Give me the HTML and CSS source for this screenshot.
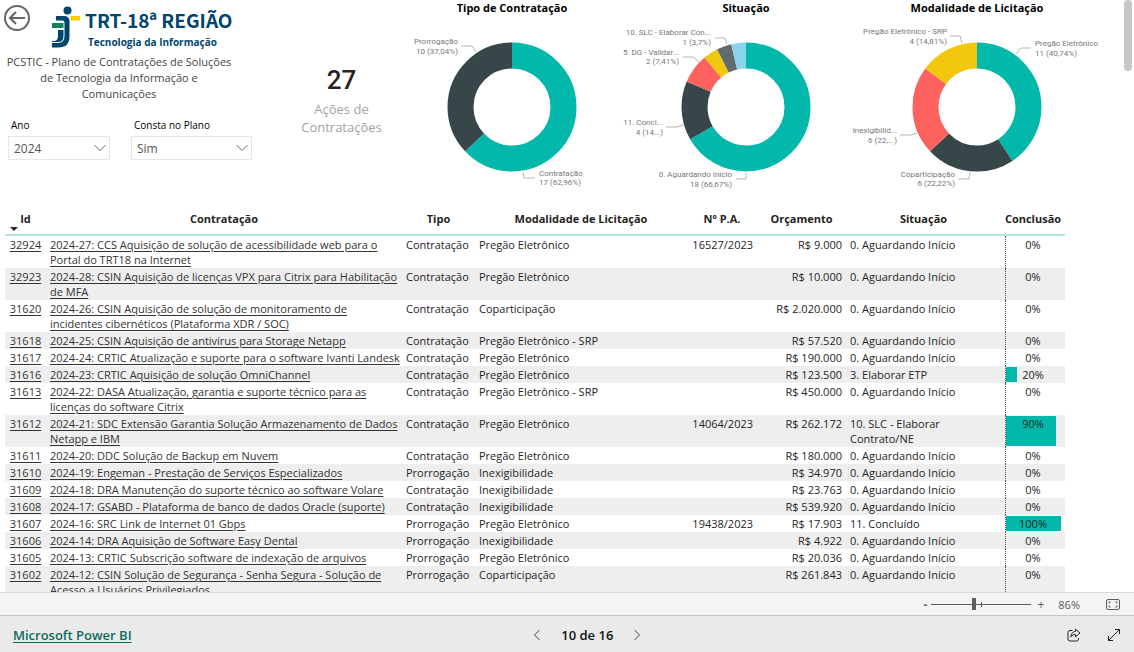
FILE: index.html
```html
<!DOCTYPE html>
<html lang="pt-BR">
<head>
<meta charset="utf-8">
<title>PCSTIC - Plano de Contratações</title>
<link rel="stylesheet" href="styles.css">
</head>
<body>
<main class="report">
  <header class="top">
    <section class="intro">
      <div class="brand">
        <button class="back" type="button" aria-label="Voltar">
          <svg width="28" height="28" viewBox="0 0 28 28"><circle cx="14" cy="14" r="12"/><path d="M22 14H7M13 8l-6 6 6 6"/></svg>
        </button>
        <svg class="logo-mark" width="30" height="43" viewBox="0 0 30 43">
          <circle cx="15.500" cy="4.500" r="4" fill="#00456e"/>
          <path d="M4 10h8q5.500 0 5.500 5.500V30q0 11.500-11 11.500H0V37h6q6.500 0 6.500-7V17q0-2.500-2.500-2.500H4z" fill="#00456e"/>
          <path d="M6 24h5.500v6q0 6-5.500 6H0v-1h2q4 0 4-5z" fill="#00456e"/>
          <path d="M0 17h11.500v5H0z" fill="#0f8060"/>
          <path d="M18.500 10H28v4.500h-9.500z" fill="#ffcb05"/>
        </svg>
        <div class="brand-text">
          <span class="brand-name">TRT-18ª REGIÃO</span>
          <span class="brand-sub">Tecnologia da Informação</span>
        </div>
      </div>
      <h1 class="title">PCSTIC - Plano de Contratações de Soluções de Tecnologia da Informação e Comunicações</h1>
      <div class="slicers">
        <div class="slicer slicer-year">
          <label for="ano">Ano</label>
          <div class="select-box">
            <select id="ano"><option>2024</option></select>
            <svg width="12" height="8" viewBox="0 0 12 8"><path d="M.5 1l5.500 5.500L11.500 1"/></svg>
          </div>
        </div>
        <div class="slicer slicer-plan">
          <label for="plano">Consta no Plano</label>
          <div class="select-box">
            <select id="plano"><option>Sim</option></select>
            <svg width="12" height="8" viewBox="0 0 12 8"><path d="M.5 1l5.500 5.500L11.500 1"/></svg>
          </div>
        </div>
      </div>
    </section>

    <section class="kpi">
      <strong class="kpi-value">27</strong>
      <span class="kpi-label">Ações de Contratações</span>
    </section>

    <section class="charts">
      <figure class="chart">
        <figcaption>Tipo de Contratação</figcaption>
        <svg width="234" height="180" viewBox="-117 -87 234 180">
          <g class="ring" transform="rotate(-90)">
            <circle class="teal" r="51.500" pathLength="27" stroke-dasharray="17 27"/>
            <circle class="dark" r="51.500" pathLength="27" stroke-dasharray="10 27" stroke-dashoffset="-17"/>
          </g>
          <path class="leader" d="M-51-61h11l4 6M11 65l1 6h11"/>
          <g class="end"><text x="-54" y="-63">Prorrogação</text><text x="-54" y="-53">10 (37,04%)</text></g>
          <text x="27" y="69">Contratação</text><text x="27" y="78">17 (62,96%)</text>
        </svg>
      </figure>
      <figure class="chart">
        <figcaption>Situação</figcaption>
        <svg width="234" height="180" viewBox="-117 -87 234 180">
          <g class="ring" transform="rotate(-90)">
            <circle class="teal" r="51.500" pathLength="27" stroke-dasharray="18 27"/>
            <circle class="dark" r="51.500" pathLength="27" stroke-dasharray="4 27" stroke-dashoffset="-18"/>
            <circle class="coral" r="51.500" pathLength="27" stroke-dasharray="2 27" stroke-dashoffset="-22"/>
            <circle class="yellow" r="51.500" pathLength="27" stroke-dasharray="1 27" stroke-dashoffset="-24"/>
            <circle class="gray" r="51.500" pathLength="27" stroke-dasharray="1 27" stroke-dashoffset="-25"/>
            <circle class="sky" r="51.500" pathLength="27" stroke-dasharray="1 27" stroke-dashoffset="-26"/>
          </g>
          <path class="leader" d="M-31-69h10l2 6M-63-50h10l6 5M-80 20h11l6-2M-10 72H0v-6"/>
          <g class="end">
            <text x="-35" y="-72">10. SLC - Elaborar Con...</text><text x="-35" y="-62">1 (3,7%)</text>
            <text x="-67" y="-52">5. DG - Validar...</text><text x="-67" y="-43">2 (7,41%)</text>
            <text x="-83" y="18">11. Concl...</text><text x="-83" y="28">4 (14...)</text>
            <text x="-14" y="70">0. Aguardando Início</text><text x="-14" y="80">18 (66,67%)</text>
          </g>
        </svg>
      </figure>
      <figure class="chart">
        <figcaption>Modalidade de Licitação</figcaption>
        <svg width="234" height="180" viewBox="-117 -87 234 180">
          <g class="ring" transform="rotate(-90)">
            <circle class="teal" r="51.500" pathLength="27" stroke-dasharray="11 27"/>
            <circle class="dark" r="51.500" pathLength="27" stroke-dasharray="6 27" stroke-dashoffset="-11"/>
            <circle class="coral" r="51.500" pathLength="27" stroke-dasharray="6 27" stroke-dashoffset="-17"/>
            <circle class="yellow" r="51.500" pathLength="27" stroke-dasharray="4 27" stroke-dashoffset="-23"/>
          </g>
          <path class="leader" d="M-27-71h10l2 7M39-53l5-6h10M-77 28h11l6-2M-19 72h11l1-7"/>
          <g class="end">
            <text x="-30" y="-73">Pregão Eletrônico - SRP</text><text x="-30" y="-63">4 (14,81%)</text>
            <text x="-80" y="26">Inexigibilid...</text><text x="-80" y="36">6 (22,...)</text>
            <text x="-22" y="70">Coparticipação</text><text x="-22" y="79">6 (22,22%)</text>
          </g>
          <text x="58" y="-61">Pregão Eletrônico</text><text x="58" y="-51">11 (40,74%)</text>
        </svg>
      </figure>
    </section>
  </header>

  <table class="grid">
    <colgroup><col class="c-id"><col><col class="c-tipo"><col class="c-mod"><col class="c-pa"><col class="c-orc"><col class="c-sit"><col class="c-con"></colgroup>
    <thead>
      <tr><th class="sorted">Id</th><th>Contratação</th><th>Tipo</th><th>Modalidade de Licitação</th><th>Nº P.A.</th><th>Orçamento</th><th>Situação</th><th>Conclusão</th></tr>
    </thead>
    <tbody>
      <tr><td><a href="#">32924</a></td><td><a href="#">2024-27: CCS Aquisição de solução de acessibilidade web para o Portal do TRT18 na Internet</a></td><td>Contratação</td><td>Pregão Eletrônico</td><td>16527/2023</td><td>R$ 9.000</td><td>0. Aguardando Início</td><td><i class="track"></i><span>0%</span></td></tr>
      <tr><td><a href="#">32923</a></td><td><a href="#">2024-28: CSIN Aquisição de licenças VPX para Citrix para Habilitação de MFA</a></td><td>Contratação</td><td>Pregão Eletrônico</td><td></td><td>R$ 10.000</td><td>0. Aguardando Início</td><td><i class="track"></i><span>0%</span></td></tr>
      <tr><td><a href="#">31620</a></td><td><a href="#">2024-26: CSIN Aquisição de solução de monitoramento de incidentes cibernéticos (Plataforma XDR / SOC)</a></td><td>Contratação</td><td>Coparticipação</td><td></td><td>R$ 2.020.000</td><td>0. Aguardando Início</td><td><i class="track"></i><span>0%</span></td></tr>
      <tr><td><a href="#">31618</a></td><td><a href="#">2024-25: CSIN Aquisição de antivírus para Storage Netapp</a></td><td>Contratação</td><td>Pregão Eletrônico - SRP</td><td></td><td>R$ 57.520</td><td>0. Aguardando Início</td><td><i class="track"></i><span>0%</span></td></tr>
      <tr><td><a href="#">31617</a></td><td><a href="#">2024-24: CRTIC Atualização e suporte para o software Ivanti Landesk</a></td><td>Contratação</td><td>Pregão Eletrônico</td><td></td><td>R$ 190.000</td><td>0. Aguardando Início</td><td><i class="track"></i><span>0%</span></td></tr>
      <tr><td><a href="#">31616</a></td><td><a href="#">2024-23: CRTIC Aquisição de solução OmniChannel</a></td><td>Contratação</td><td>Pregão Eletrônico</td><td></td><td>R$ 123.500</td><td>3. Elaborar ETP</td><td><i class="track"><b style="width:20%"></b></i><span>20%</span></td></tr>
      <tr><td><a href="#">31613</a></td><td><a href="#">2024-22: DASA Atualização, garantia e suporte técnico para as licenças do software Citrix</a></td><td>Contratação</td><td>Pregão Eletrônico - SRP</td><td></td><td>R$ 450.000</td><td>0. Aguardando Início</td><td><i class="track"></i><span>0%</span></td></tr>
      <tr><td><a href="#">31612</a></td><td><a href="#">2024-21: SDC Extensão Garantia Solução Armazenamento de Dados Netapp e IBM</a></td><td>Contratação</td><td>Pregão Eletrônico</td><td>14064/2023</td><td>R$ 262.172</td><td>10. SLC - Elaborar Contrato/NE</td><td><i class="track"><b style="width:90%"></b></i><span>90%</span></td></tr>
      <tr><td><a href="#">31611</a></td><td><a href="#">2024-20: DDC Solução de Backup em Nuvem</a></td><td>Contratação</td><td>Pregão Eletrônico</td><td></td><td>R$ 180.000</td><td>0. Aguardando Início</td><td><i class="track"></i><span>0%</span></td></tr>
      <tr><td><a href="#">31610</a></td><td><a href="#">2024-19: Engeman - Prestação de Serviços Especializados</a></td><td>Prorrogação</td><td>Inexigibilidade</td><td></td><td>R$ 34.970</td><td>0. Aguardando Início</td><td><i class="track"></i><span>0%</span></td></tr>
      <tr><td><a href="#">31609</a></td><td><a href="#">2024-18: DRA Manutenção do suporte técnico ao software Volare</a></td><td>Contratação</td><td>Inexigibilidade</td><td></td><td>R$ 23.763</td><td>0. Aguardando Início</td><td><i class="track"></i><span>0%</span></td></tr>
      <tr><td><a href="#">31608</a></td><td><a href="#">2024-17: GSABD - Plataforma de banco de dados Oracle (suporte)</a></td><td>Contratação</td><td>Inexigibilidade</td><td></td><td>R$ 539.920</td><td>0. Aguardando Início</td><td><i class="track"></i><span>0%</span></td></tr>
      <tr><td><a href="#">31607</a></td><td><a href="#">2024-16: SRC Link de Internet 01 Gbps</a></td><td>Prorrogação</td><td>Pregão Eletrônico</td><td>19438/2023</td><td>R$ 17.903</td><td>11. Concluído</td><td><i class="track"><b style="width:100%"></b></i><span>100%</span></td></tr>
      <tr><td><a href="#">31606</a></td><td><a href="#">2024-14: DRA Aquisição de Software Easy Dental</a></td><td>Prorrogação</td><td>Inexigibilidade</td><td></td><td>R$ 4.922</td><td>0. Aguardando Início</td><td><i class="track"></i><span>0%</span></td></tr>
      <tr><td><a href="#">31605</a></td><td><a href="#">2024-13: CRTIC Subscrição software de indexação de arquivos</a></td><td>Prorrogação</td><td>Pregão Eletrônico</td><td></td><td>R$ 20.036</td><td>0. Aguardando Início</td><td><i class="track"></i><span>0%</span></td></tr>
      <tr><td><a href="#">31602</a></td><td><a href="#">2024-12: CSIN Solução de Segurança - Senha Segura - Solução de Acesso a Usuários Privilegiados</a></td><td>Prorrogação</td><td>Coparticipação</td><td></td><td>R$ 261.843</td><td>0. Aguardando Início</td><td><i class="track"></i><span>0%</span></td></tr>
    </tbody>
  </table>
  <div class="scroll-thumb"></div>
</main>

<div class="zoom-bar">
  <button type="button" aria-label="Diminuir zoom">-</button>
  <div class="slider">
    <input type="range" min="0" max="100" value="42" aria-label="Zoom">
    <i class="tick"></i>
  </div>
  <button type="button" aria-label="Aumentar zoom">+</button>
  <output>86%</output>
  <button class="fit" type="button" aria-label="Ajustar à página">
    <svg width="14" height="11" viewBox="0 0 14 11"><rect x=".5" y=".5" width="13" height="10" rx="1.500"/><path d="M3 4.500V3h1.500M9.500 3H11v1.500M11 6.500V8H9.500M4.500 8H3V6.500"/></svg>
  </button>
</div>

<footer class="footer">
  <a class="powerbi" href="#">Microsoft Power BI</a>
  <nav class="pager" aria-label="Páginas">
    <button type="button" aria-label="Página anterior"><svg width="8" height="12" viewBox="0 0 8 12"><path d="M6.500 1l-5 5 5 5"/></svg></button>
    <span>10 de 16</span>
    <button type="button" aria-label="Próxima página"><svg width="8" height="12" viewBox="0 0 8 12"><path d="M1.500 1l5 5-5 5"/></svg></button>
  </nav>
  <div class="actions">
    <button type="button" aria-label="Compartilhar"><svg width="14" height="14" viewBox="0 0 14 14"><path d="M5.500 2.500H3a2 2 0 0 0-2 2V11a2 2 0 0 0 2 2h6.500a2 2 0 0 0 2-2v-1M8.500 1.200l4.500 3.800-4.500 3.800V6.600C6.500 6.500 5 7.300 3.800 9c.2-3.200 1.800-5.200 4.700-5.600z"/></svg></button>
    <button type="button" aria-label="Tela inteira"><svg width="14" height="14" viewBox="0 0 14 14"><path d="M1.500 12.500l11-11M8 1.500h4.500V6M1.500 8v4.500H6"/></svg></button>
  </div>
</footer>
</body>
</html>
```
FILE: styles.css
```css
* { box-sizing: border-box; }

body {
  margin: 0;
  height: 100vh;
  display: flex;
  flex-direction: column;
  font-family: "Open Sans", "Noto Sans", sans-serif;
  font-size: 11px;
  color: #252423;
  background: #fff;
}

button {
  display: inline-flex;
  align-items: center;
  justify-content: center;
  padding: 0;
  border: 0;
  background: none;
  font: inherit;
  color: inherit;
}

svg { display: block; }

.report {
  position: relative;
  flex: 1;
  min-height: 0;
  overflow: hidden;
}

.top {
  display: flex;
  height: 208px;
  padding-right: 43px;
}

.intro { width: 288px; }

.brand {
  display: flex;
  align-items: flex-start;
  height: 54px;
  padding: 4px 0 0 3px;
}

.back svg { fill: none; stroke: #666; stroke-width: 2; }

.logo-mark { margin: 2px 3px 0 21px; }

.brand-text {
  display: flex;
  flex-direction: column;
  color: #00456e;
}

.brand-name {
  font: 700 19px/32px "Noto Sans CJK SC", sans-serif;
  white-space: nowrap;
}

.brand-sub {
  padding-left: 3px;
  font-size: 10px;
  font-weight: 700;
  line-height: 12px;
  white-space: nowrap;
}

.title {
  width: 228px;
  margin: 0 0 0 5px;
  font-size: 11px;
  font-weight: 400;
  line-height: 16px;
  text-align: center;
  color: #444;
}

.slicers {
  display: flex;
  gap: 21px;
  padding: 16px 0 0 8px;
}

.slicer label {
  display: block;
  padding-left: 3px;
  font-size: 10px;
  line-height: 14px;
  color: #000;
}

.slicer-year { width: 102px; }
.slicer-plan { width: 121px; }

.select-box { position: relative; margin-top: 4px; }

.select-box select {
  appearance: none;
  width: 100%;
  height: 24px;
  padding: 0 5px;
  border: 1px solid #e6e6e6;
  border-radius: 0;
  background: #fff;
  font: 12px "Open Sans", sans-serif;
  color: #555;
}

.select-box svg {
  position: absolute;
  top: 8px;
  right: 4px;
  fill: none;
  stroke: #666;
  pointer-events: none;
}

.kpi {
  display: flex;
  flex-direction: column;
  align-items: center;
  width: 107px;
  padding-top: 64px;
}

.kpi-value { font: 500 26px/32px Roboto, sans-serif; }

.kpi-label {
  width: 90px;
  padding-top: 4px;
  font-size: 13px;
  line-height: 18px;
  text-align: center;
  color: #a3a3a3;
}

.charts {
  flex: 1;
  display: grid;
  grid-template-columns: 39fr 39fr 38fr;
}

.chart {
  display: flex;
  flex-direction: column;
  align-items: center;
  min-width: 0;
  margin: 0;
}

.chart figcaption {
  font-size: 11px;
  font-weight: 700;
  line-height: 16px;
  padding-bottom: 4px;
  color: #000;
}

.chart svg { overflow: visible; }
.chart text { font: 8px Roboto, sans-serif; fill: #777; }
.chart .end { text-anchor: end; }
.ring circle { fill: none; stroke-width: 26; }
.ring .teal { stroke: #01b8aa; }
.ring .dark { stroke: #374649; }
.ring .coral { stroke: #fd625e; }
.ring .yellow { stroke: #f2c80f; }
.ring .gray { stroke: #5f6b6d; }
.ring .sky { stroke: #8ad4eb; }
.leader { fill: none; stroke: #b5b5b5; }

.grid {
  width: calc(100% - 74px);
  margin-left: 5px;
  border-collapse: separate;
  border-spacing: 0;
  table-layout: fixed;
}

.c-id { width: 41px; }
.c-tipo { width: 73px; }
.c-mod { width: 212px; }
.c-pa { width: 70px; }
.c-orc { width: 89px; }
.c-sit { width: 155px; }
.c-con { width: 64px; }

.grid th {
  height: 28px;
  padding: 0 0 4px;
  border-bottom: 2px solid #a9e8e3;
  font-weight: 700;
  line-height: 16px;
  white-space: nowrap;
}

.grid th.sorted { position: relative; }

.sorted::after {
  content: "";
  position: absolute;
  left: 5px;
  bottom: 3px;
  border: 4px solid transparent;
  border-top-color: #252423;
  border-bottom-width: 0;
}

.grid td {
  position: relative;
  padding: 1px 4px;
  line-height: 15px;
  vertical-align: top;
}

.grid tbody tr:nth-child(even) { background: #eee; }
.grid td:nth-child(1) { text-align: center; padding: 1px 0; }
.grid td:nth-child(2) { padding-right: 0; }
.grid td:nth-child(5) { text-align: right; }
.grid td:nth-child(6) { text-align: right; }
.grid td:nth-child(7) { padding-right: 40px; }
.grid td:nth-child(8) { text-align: center; padding: 1px 0; }
.grid td:nth-child(8) span { position: relative; }

.grid a {
  color: #333;
  text-decoration: underline;
  text-underline-offset: 2px;
}

.track {
  position: absolute;
  inset: 0 4px 0 4px;
  border-left: 1px dotted #555;
}

.track b {
  display: block;
  height: 100%;
  border: solid transparent;
  border-width: 1px 0;
  background: #01b8aa padding-box;
}

.scroll-thumb {
  position: absolute;
  top: 0;
  right: 2px;
  width: 8px;
  height: 71px;
  border-radius: 4px;
  background: #c8c8c8;
}

.zoom-bar {
  display: flex;
  align-items: center;
  justify-content: flex-end;
  height: 24px;
  padding-right: 14px;
  border-top: 1px solid #d8d8d8;
  border-bottom: 1px solid #c4c4c4;
  background: #f4f4f4;
  font-size: 12px;
  color: #605e5c;
}

.zoom-bar > button:first-child { font-weight: 700; }

.slider {
  position: relative;
  display: flex;
  width: 100px;
  margin: 0 6px 0 4px;
}

.slider input {
  appearance: none;
  width: 100%;
  height: 12px;
  margin: 0;
  background: linear-gradient(#605e5c, #605e5c) center / 100% 1px no-repeat;
}

.slider input::-webkit-slider-thumb {
  appearance: none;
  width: 4px;
  height: 12px;
  background: #605e5c;
}

.tick {
  position: absolute;
  left: 50px;
  top: 4px;
  width: 1px;
  height: 5px;
  background: #605e5c;
}

.zoom-bar output { margin: 0 26px 0 14px; font-size: 11px; }
.fit svg { fill: none; stroke: #605e5c; }

.footer {
  display: flex;
  align-items: center;
  height: 36px;
  padding: 2px 13px 0;
  background: #eaeaea;
}

.powerbi { font-size: 13px; font-weight: 600; color: #0f6a5e; text-underline-offset: 2px; }

.pager {
  display: flex;
  align-items: center;
  gap: 20px;
  margin: 0 auto;
  font-size: 13px;
  font-weight: 600;
  color: #111;
}

.pager svg { fill: none; stroke: #444; }

.actions {
  display: flex;
  gap: 26px;
  padding-left: 24px;
}

.actions svg { fill: none; stroke: #222; }
```
